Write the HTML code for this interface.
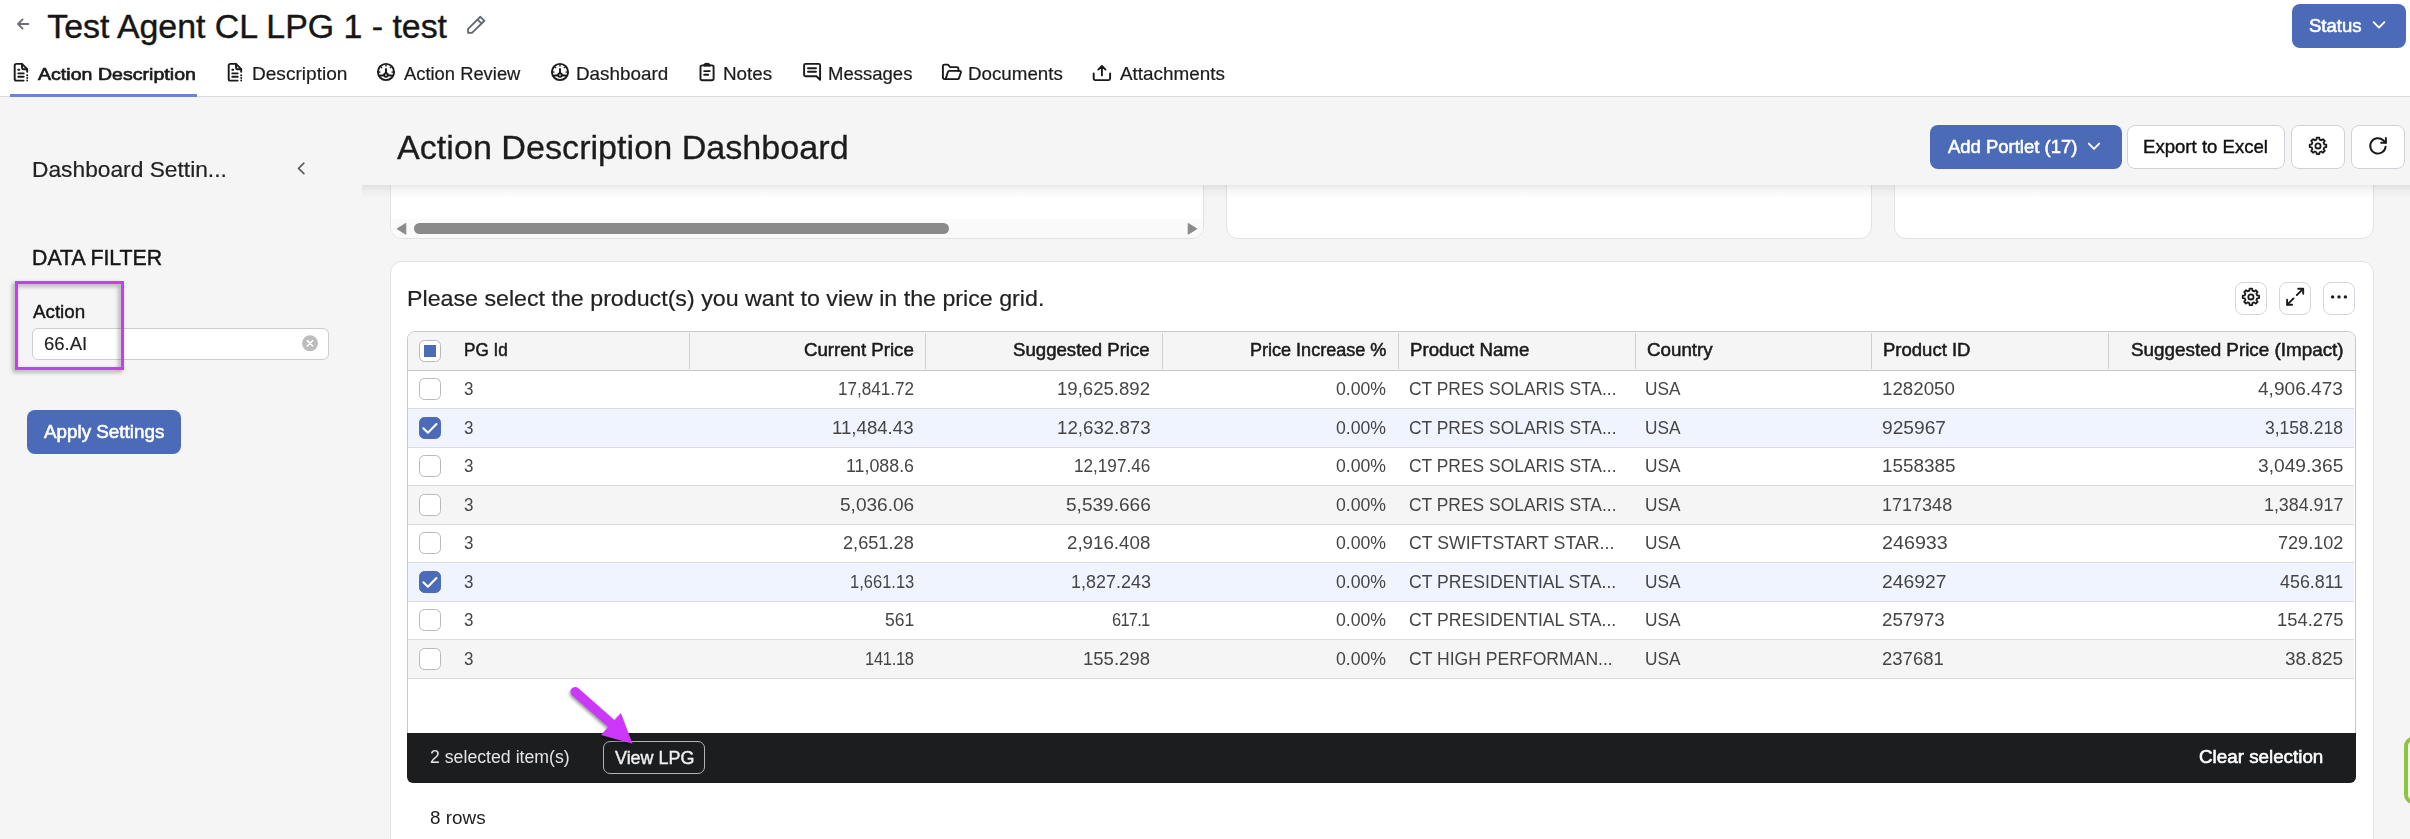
<!DOCTYPE html>
<html lang="en"><head><meta charset="utf-8"><title>Action Description Dashboard</title>
<style>

*{box-sizing:border-box}
html,body{margin:0;padding:0}
body{width:2410px;height:839px;overflow:hidden;background:#f5f5f5;font-family:"Liberation Sans",sans-serif;position:relative}
.a{position:absolute}
.t{position:absolute;white-space:pre;line-height:1;transform-origin:0 50%}
svg{position:absolute;overflow:visible}
.btn{position:absolute;border-radius:8px}
.wb{background:#fff;border:1px solid #cfd2d8}
.cb{position:absolute;width:22px;height:22px;border:1px solid #b9b9b9;border-radius:5.5px;background:#fff}
.cb.on{background:#4b6bb9;border-color:#4b6bb9}
.row{position:absolute;left:408px;width:1946px;border-bottom:1px solid #dcdcdc}
.sep{position:absolute;top:332.5px;width:1px;height:36px;background:#cfcfcf}

</style></head>
<body>
<div class="a" style="left:0;top:0;width:2410px;height:97px;background:#fff;border-bottom:1px solid #dadada"></div>
<div class="a" style="left:10px;top:93.7px;width:187px;height:3px;background:#6985d3"></div>
<svg style="left:14px;top:14px" width="20" height="20" viewBox="0 0 20 20"><path d="M14.3 10H4.3M8.6 5.4L4 10l4.6 4.6" fill="none" stroke="#6c6f75" stroke-width="1.9" stroke-linecap="round" stroke-linejoin="round"/></svg>
<svg style="left:460px;top:10px" width="30" height="30" viewBox="0 0 30 30"><path d="M8.1 22.9v-4l12.3-12.1 4 4L12 22.9z M17.6 9.6l4 4" fill="none" stroke="#666b73" stroke-width="1.9" stroke-linejoin="round" stroke-linecap="round"/></svg>
<div class="btn" style="left:2292px;top:4px;width:114px;height:44px;background:#4b6bb9"></div>
<svg style="left:2370px;top:18px" width="18" height="14" viewBox="0 0 18 14"><path d="M3.6 4.2L9 9.6l5.4-5.4" fill="none" stroke="#fff" stroke-width="1.9" stroke-linecap="round" stroke-linejoin="round"/></svg>
<svg style="left:12.6px;top:62px" width="18" height="21" viewBox="0 0 18 21"><g fill="none" stroke="#1a1a1a" stroke-width="1.9" stroke-linecap="round" stroke-linejoin="round"><path d="M10.6 18.6H3.3a1.6 1.6 0 0 1-1.6-1.6V3.5A1.6 1.6 0 0 1 3.300 1.900H9l5.200 5.200v2.600"/><path d="M9 2.200v3.400a1.600 1.600 0 0 0 1.600 1.600h3.400"/><path d="M5.300 7.700h1M5.300 11.400h5.400M5.300 14.800h5.400"/><path d="M14.200 13.300v.1M14.200 15.900v.1M14.200 18.500v.1" stroke-width="1.9"/></g></svg>
<svg style="left:226.8px;top:62px" width="18" height="21" viewBox="0 0 18 21"><g fill="none" stroke="#1a1a1a" stroke-width="1.9" stroke-linecap="round" stroke-linejoin="round"><path d="M10.6 18.6H3.3a1.6 1.6 0 0 1-1.6-1.6V3.5A1.6 1.6 0 0 1 3.300 1.900H9l5.200 5.200v2.600"/><path d="M9 2.200v3.400a1.600 1.600 0 0 0 1.600 1.600h3.400"/><path d="M5.300 7.700h1M5.300 11.400h5.400M5.300 14.800h5.400"/><path d="M14.200 13.300v.1M14.200 15.900v.1M14.200 18.500v.1" stroke-width="1.9"/></g></svg>
<svg style="left:376.2px;top:62px" width="20" height="20" viewBox="0 0 20 20"><g fill="none" stroke="#1a1a1a" stroke-width="1.9" stroke-linecap="round" stroke-linejoin="round"><circle cx="10" cy="10" r="8.1"/><path d="M10 6.900v4.200"/><circle cx="10" cy="13" r="1.800"/><path d="M2.800 13.700Q5.500 13.200 8.100 13.200M11.900 13.200Q14.500 13.200 17.200 13.700"/></g><g fill="#1a1a1a"><circle cx="10" cy="3.700" r=".85"/><circle cx="5.500" cy="5.500" r=".85"/><circle cx="14.500" cy="5.500" r=".85"/><circle cx="3.700" cy="10" r=".85"/><circle cx="16.300" cy="10" r=".85"/></g></svg>
<svg style="left:550.2px;top:62px" width="20" height="20" viewBox="0 0 20 20"><g fill="none" stroke="#1a1a1a" stroke-width="1.9" stroke-linecap="round" stroke-linejoin="round"><circle cx="10" cy="10" r="8.1"/><path d="M10 6.900v4.200"/><circle cx="10" cy="13" r="1.800"/><path d="M2.800 13.700Q5.500 13.200 8.100 13.200M11.900 13.200Q14.500 13.200 17.200 13.700"/></g><g fill="#1a1a1a"><circle cx="10" cy="3.700" r=".85"/><circle cx="5.500" cy="5.500" r=".85"/><circle cx="14.500" cy="5.500" r=".85"/><circle cx="3.700" cy="10" r=".85"/><circle cx="16.300" cy="10" r=".85"/></g></svg>
<svg style="left:697px;top:60px" width="20" height="24" viewBox="0 0 20 24"><g fill="none" stroke="#1a1a1a" stroke-width="1.9" stroke-linecap="round" stroke-linejoin="round"><rect x="3.500" y="5.400" width="13.100" height="14.800" rx="1.800"/><path d="M7.300 5.400a2.750 1.700 0 0 1 5.500 0"/><path d="M7.300 5.600h5.500"/><path d="M7.200 11.100h5.600M7.200 14.800h4"/></g></svg>
<svg style="left:801px;top:60px" width="22" height="24" viewBox="0 0 22 24"><g fill="none" stroke="#1a1a1a" stroke-width="1.9" stroke-linecap="round" stroke-linejoin="round"><path d="M4.600 3.900h13a1.500 1.500 0 0 1 1.500 1.500v14.400l-3.700-3.500H4.600a1.500 1.500 0 0 1-1.500-1.500V5.400a1.500 1.500 0 0 1 1.500-1.500z"/><path d="M7 8.300h8M7 11.700h8"/></g></svg>
<svg style="left:940px;top:61px" width="24" height="22" viewBox="0 0 24 22"><g fill="none" stroke="#1a1a1a" stroke-width="1.9" stroke-linecap="round" stroke-linejoin="round"><path d="M5.600 18.100H4.400a1.500 1.500 0 0 1-1.500-1.500V5.100a1.500 1.500 0 0 1 1.500-1.500h3.500l2.300 2.500h6.700a1.500 1.500 0 0 1 1.500 1.500v2.300"/><path d="M5.600 18.100l2.300-7.100a1.500 1.500 0 0 1 1.400-1.100h10.400a1.200 1.200 0 0 1 1.200 1.600l-1.900 5.600a1.500 1.500 0 0 1-1.400 1z"/></g></svg>
<svg style="left:1091px;top:62px" width="22" height="22" viewBox="0 0 22 22"><g fill="none" stroke="#1a1a1a" stroke-width="1.9" stroke-linecap="round" stroke-linejoin="round"><path d="M2.700 11.400v5.200a1.500 1.500 0 0 0 1.500 1.500h13.400a1.500 1.500 0 0 0 1.500-1.500v-5.200"/><path d="M10.900 13.400V4.200M7.300 7.600l3.600-3.600 3.600 3.600"/></g></svg>
<div class="a" style="left:390px;top:150px;width:814px;height:89px;background:#fff;border:1px solid #e0e2e5;border-radius:12px"></div>
<div class="a" style="left:1226px;top:150px;width:646px;height:89px;background:#fff;border:1px solid #e0e2e5;border-radius:12px"></div>
<div class="a" style="left:1894px;top:150px;width:480px;height:89px;background:#fff;border:1px solid #e0e2e5;border-radius:12px"></div>
<div class="a" style="left:391px;top:219px;width:812px;height:19px;background:#fafafa;border-radius:0 0 11px 11px"></div>
<div class="a" style="left:414px;top:223px;width:535px;height:11px;background:#8a8a8a;border-radius:6px"></div>
<svg style="left:396px;top:222px" width="12" height="14" viewBox="0 0 12 14"><path d="M1.200 6.800L9.800 1.400v10.800z" fill="#8a8a8a" stroke="#8a8a8a" stroke-width="1" stroke-linejoin="round"/></svg>
<svg style="left:1186px;top:222px" width="12" height="14" viewBox="0 0 12 14"><path d="M10.800 6.800L2.200 1.400v10.800z" fill="#8a8a8a" stroke="#8a8a8a" stroke-width="1" stroke-linejoin="round"/></svg>
<div class="a" style="left:362px;top:185px;width:2048px;height:13px;background:linear-gradient(to bottom,rgba(0,0,0,.085),rgba(0,0,0,.03) 45%,rgba(0,0,0,0))"></div>
<div class="a" style="left:362px;top:97px;width:2048px;height:88px;background:#f5f5f5"></div>
<div class="btn" style="left:1930px;top:125px;width:192px;height:44px;background:#4b6bb9"></div>
<svg style="left:2085px;top:139px" width="18" height="14" viewBox="0 0 18 14"><path d="M3.800 4.600L9 9.800l5.200-5.200" fill="none" stroke="#fff" stroke-width="1.9" stroke-linecap="round" stroke-linejoin="round"/></svg>
<div class="btn wb" style="left:2127px;top:125px;width:158px;height:44px"></div>
<div class="btn wb" style="left:2291px;top:125px;width:54px;height:44px"></div>
<div class="btn wb" style="left:2351px;top:125px;width:54px;height:44px"></div>
<svg style="left:0;top:0" width="10" height="10"><g fill="none" stroke="#1a1a1a" stroke-width="1.8" stroke-linejoin="round"><path d="M2316.43 139.59 L2316.69 137.60 L2319.31 137.60 L2319.57 139.59 L2321.35 140.33 L2322.94 139.10 L2324.80 140.96 L2323.57 142.55 L2324.31 144.33 L2326.30 144.59 L2326.30 147.21 L2324.31 147.47 L2323.57 149.25 L2324.80 150.84 L2322.94 152.70 L2321.35 151.47 L2319.57 152.21 L2319.31 154.20 L2316.69 154.20 L2316.43 152.21 L2314.65 151.47 L2313.06 152.70 L2311.20 150.84 L2312.43 149.25 L2311.69 147.47 L2309.70 147.21 L2309.70 144.59 L2311.69 144.33 L2312.43 142.55 L2311.20 140.96 L2313.06 139.10 L2314.65 140.33Z"/><circle cx="2318" cy="145.9" r="2.6"/></g></svg>
<svg style="left:0;top:0" width="10" height="10"><g fill="none" stroke="#1a1a1a" stroke-width="1.9" stroke-linecap="round" stroke-linejoin="round"><path d="M2385.600 146.600a7.700 7.700 0 1 1-2.400-6.300l2.700 2.500"/><path d="M2385.900 138v4.800h-4.800"/></g></svg>
<svg style="left:292px;top:158px" width="18" height="20" viewBox="0 0 18 20"><path d="M11.900 5.200L6.500 10.400l5.400 5.200" fill="none" stroke="#555a61" stroke-width="1.600" stroke-linecap="round" stroke-linejoin="round"/></svg>
<div class="a" style="left:32px;top:328px;width:297px;height:32px;background:#fff;border:1px solid #cdcdcd;border-radius:6px"></div>
<svg style="left:300px;top:333px" width="20" height="20" viewBox="0 0 20 20"><circle cx="10" cy="10.300" r="8" fill="#bdbdbd"/><path d="M7.300 7.600l5.400 5.400M12.700 7.600l-5.400 5.400" stroke="#fff" stroke-width="1.500" stroke-linecap="round"/></svg>
<div class="btn" style="left:27px;top:410px;width:154px;height:44px;background:#4b6bb9"></div>
<div class="a" style="left:15px;top:281px;width:109px;height:89px;border:3.2px solid #cb3bf7;filter:drop-shadow(-1.500px 2.500px 2px rgba(0,0,0,.38))"></div>
<div class="a" style="left:390px;top:261px;width:1984px;height:620px;background:#fff;border:1px solid #e0e2e5;border-radius:12px"></div>
<div class="a" style="left:2235.3px;top:282.200px;width:31.700px;height:32.500px;background:#fff;border:1px solid #d3d6dc;border-radius:8px"></div>
<div class="a" style="left:2279.2px;top:282.200px;width:31.700px;height:32.500px;background:#fff;border:1px solid #d3d6dc;border-radius:8px"></div>
<div class="a" style="left:2323.1px;top:282.200px;width:31.700px;height:32.500px;background:#fff;border:1px solid #d3d6dc;border-radius:8px"></div>
<svg style="left:0;top:0" width="10" height="10"><g fill="none" stroke="#1a1a1a" stroke-width="1.8" stroke-linejoin="round"><path d="M2249.36 290.69 L2249.60 288.70 L2252.20 288.70 L2252.44 290.69 L2254.20 291.42 L2255.78 290.19 L2257.61 292.02 L2256.38 293.60 L2257.11 295.36 L2259.10 295.60 L2259.10 298.20 L2257.11 298.44 L2256.38 300.20 L2257.61 301.78 L2255.78 303.61 L2254.20 302.38 L2252.44 303.11 L2252.20 305.10 L2249.60 305.10 L2249.36 303.11 L2247.60 302.38 L2246.02 303.61 L2244.19 301.78 L2245.42 300.20 L2244.69 298.44 L2242.70 298.20 L2242.70 295.60 L2244.69 295.36 L2245.42 293.60 L2244.19 292.02 L2246.02 290.19 L2247.60 291.42Z"/><circle cx="2250.9" cy="296.9" r="2.6"/></g></svg>
<svg style="left:0;top:0" width="10" height="10"><g fill="none" stroke="#1a1a1a" stroke-width="1.9" stroke-linecap="round" stroke-linejoin="round"><path d="M2287.300 304.600l6.200-6.200M2296.800 295.100l6.200-6.200"/><path d="M2287.100 299.800v5h5M2298.200 288.800h5v5"/></g></svg>
<svg style="left:0;top:0" width="10" height="10"><g fill="#1a1a1a"><circle cx="2332.600" cy="296.900" r="1.700"/><circle cx="2339" cy="296.900" r="1.700"/><circle cx="2345.400" cy="296.900" r="1.700"/></g></svg>
<div class="a" style="left:407px;top:331px;width:1949px;height:420px;background:#fff;border:1px solid #c5c8cc;border-radius:8px 8px 0 0"></div>
<div class="a" style="left:408px;top:332px;width:1947px;height:39px;background:#f5f5f5;border-bottom:1px solid #c6c6c6;border-radius:7px 7px 0 0"></div>
<div class="sep" style="left:689px"></div>
<div class="sep" style="left:925.3px"></div>
<div class="sep" style="left:1162px"></div>
<div class="sep" style="left:1398.3px"></div>
<div class="sep" style="left:1635px"></div>
<div class="sep" style="left:1871.3px"></div>
<div class="sep" style="left:2108px"></div>
<div class="row" style="top:371px;height:38px;background:#fff"></div>
<div class="row" style="top:409px;height:39px;background:#f0f4fe"></div>
<div class="row" style="top:448px;height:38px;background:#fff"></div>
<div class="row" style="top:486px;height:39px;background:#f5f5f5"></div>
<div class="row" style="top:525px;height:38px;background:#fff"></div>
<div class="row" style="top:563px;height:39px;background:#f0f4fe"></div>
<div class="row" style="top:602px;height:38px;background:#fff"></div>
<div class="row" style="top:640px;height:39px;background:#f5f5f5"></div>
<div class="cb" style="left:419px;top:340px"></div>
<div class="a" style="left:424px;top:345px;width:12px;height:12px;background:#4b6bb9"></div>
<div class="cb" style="left:419px;top:378px"></div>
<div class="cb on" style="left:419px;top:417px"></div>
<svg style="left:419px;top:417px" width="22" height="22" viewBox="0 0 22 22"><path d="M4.400 11.300l4.500 4.400 8.600-8.700" fill="none" stroke="#fff" stroke-width="2.100" stroke-linecap="round" stroke-linejoin="round"/></svg>
<div class="cb" style="left:419px;top:455px"></div>
<div class="cb" style="left:419px;top:494px"></div>
<div class="cb" style="left:419px;top:532px"></div>
<div class="cb on" style="left:419px;top:571px"></div>
<svg style="left:419px;top:571px" width="22" height="22" viewBox="0 0 22 22"><path d="M4.400 11.300l4.500 4.400 8.600-8.700" fill="none" stroke="#fff" stroke-width="2.100" stroke-linecap="round" stroke-linejoin="round"/></svg>
<div class="cb" style="left:419px;top:609px"></div>
<div class="cb" style="left:419px;top:648px"></div>
<div class="a" style="left:407px;top:733px;width:1949px;height:50px;background:#1c1d1f;border-radius:0 0 6px 6px"></div>
<div class="a" style="left:603px;top:741px;width:102px;height:33px;border:1px solid #b4b4b4;border-radius:7px"></div>
<svg style="left:0;top:0" width="10" height="10"><g filter="drop-shadow(-1px 2px 1.500px rgba(0,0,0,.4))"><path d="M575.300 691.700L613 725" fill="none" stroke="#cc38fa" stroke-width="9.500" stroke-linecap="round"/><path d="M632.500 743.700L601 734.900L620.900 713Z" fill="#cc38fa"/></g></svg>
<div class="a" style="left:2404px;top:737px;width:40px;height:67px;border:4px solid #8cc63f;border-radius:9px;background:#f4f4f4"></div>
<div id="texts">
<span class="t" style="left:47.24px;top:10px;font-size:33.88px;color:#161616;-webkit-text-stroke:0.4px #161616;">Test Agent CL LPG 1 - test</span>
<span class="t" style="left:38.44px;top:66px;font-size:17.3px;color:#1c1c1c;letter-spacing:0.03px;transform:scaleX(1.13);-webkit-text-stroke:0.7px #1c1c1c;">Action Description</span>
<span class="t" style="left:251.71px;top:65px;font-size:18.03px;color:#1c1c1c;transform:scaleX(1.0583);-webkit-text-stroke:0.2px #1c1c1c;">Description</span>
<span class="t" style="left:403.59px;top:65px;font-size:18.03px;color:#1c1c1c;transform:scaleX(1.0194);-webkit-text-stroke:0.2px #1c1c1c;">Action Review</span>
<span class="t" style="left:575.93px;top:65px;font-size:18.03px;color:#1c1c1c;transform:scaleX(1.0457);-webkit-text-stroke:0.2px #1c1c1c;">Dashboard</span>
<span class="t" style="left:722.93px;top:65px;font-size:18.03px;color:#1c1c1c;transform:scaleX(1.046);-webkit-text-stroke:0.2px #1c1c1c;">Notes</span>
<span class="t" style="left:827.75px;top:65px;font-size:18.03px;color:#1c1c1c;transform:scaleX(1.0284);-webkit-text-stroke:0.2px #1c1c1c;">Messages</span>
<span class="t" style="left:967.93px;top:65px;font-size:18.03px;color:#1c1c1c;transform:scaleX(1.0412);-webkit-text-stroke:0.2px #1c1c1c;">Documents</span>
<span class="t" style="left:1119.59px;top:65px;font-size:18.03px;color:#1c1c1c;transform:scaleX(1.047);-webkit-text-stroke:0.2px #1c1c1c;">Attachments</span>
<span class="t" style="left:2309.21px;top:18px;font-size:17.65px;color:#ffffff;transform:scaleX(1.0489);-webkit-text-stroke:0.55px #ffffff;">Status</span>
<span class="t" style="left:32.31px;top:159px;font-size:22.26px;color:#222;transform:scaleX(1.0229);-webkit-text-stroke:0.2px #222;">Dashboard Settin...</span>
<span class="t" style="left:32.48px;top:247px;font-size:21.89px;color:#161616;transform:scaleX(0.9737);-webkit-text-stroke:0.45px #161616;">DATA FILTER</span>
<span class="t" style="left:33.49px;top:304px;font-size:17.74px;color:#161616;transform:scaleX(1.0583);-webkit-text-stroke:0.4px #161616;">Action</span>
<span class="t" style="left:43.68px;top:335px;font-size:18.1px;color:#222;transform:scaleX(1.0239);-webkit-text-stroke:0.15px #222;">66.AI</span>
<span class="t" style="left:43.9px;top:424px;font-size:17.65px;color:#fff;transform:scaleX(1.0668);-webkit-text-stroke:0.55px #fff;">Apply Settings</span>
<span class="t" style="left:396.64px;top:131px;font-size:33.71px;color:#1c1c1c;transform:scaleX(1.013);-webkit-text-stroke:0.3px #1c1c1c;">Action Description Dashboard</span>
<span class="t" style="left:1947.6px;top:139px;font-size:17.65px;color:#fff;transform:scaleX(1.047);-webkit-text-stroke:0.55px #fff;">Add Portlet (17)</span>
<span class="t" style="left:2143.49px;top:139px;font-size:17.86px;color:#111;transform:scaleX(1.0407);-webkit-text-stroke:0.4px #111;">Export to Excel</span>
<span class="t" style="left:406.97px;top:288px;font-size:22.26px;color:#222;transform:scaleX(1.0432);-webkit-text-stroke:0.2px #222;">Please select the product(s) you want to view in the price grid.</span>
<span class="t" style="left:464.03px;top:342px;font-size:17.59px;color:#1a1a1a;transform:scaleX(0.9757);-webkit-text-stroke:0.5px #1a1a1a;">PG Id</span>
<span class="t" style="left:804.08px;top:342px;font-size:17.59px;color:#1a1a1a;transform:scaleX(1.0604);-webkit-text-stroke:0.5px #1a1a1a;">Current Price</span>
<span class="t" style="left:1013.37px;top:342px;font-size:17.59px;color:#1a1a1a;transform:scaleX(1.0594);-webkit-text-stroke:0.5px #1a1a1a;">Suggested Price</span>
<span class="t" style="left:1249.58px;top:342px;font-size:17.59px;color:#1a1a1a;transform:scaleX(1.0261);-webkit-text-stroke:0.5px #1a1a1a;">Price Increase %</span>
<span class="t" style="left:1409.94px;top:342px;font-size:17.59px;color:#1a1a1a;transform:scaleX(1.0615);-webkit-text-stroke:0.5px #1a1a1a;">Product Name</span>
<span class="t" style="left:1647.18px;top:342px;font-size:17.59px;color:#1a1a1a;transform:scaleX(1.0663);-webkit-text-stroke:0.5px #1a1a1a;">Country</span>
<span class="t" style="left:1882.75px;top:342px;font-size:17.59px;color:#1a1a1a;transform:scaleX(1.0535);-webkit-text-stroke:0.5px #1a1a1a;">Product ID</span>
<span class="t" style="left:2130.66px;top:342px;font-size:17.59px;color:#1a1a1a;transform:scaleX(1.072);-webkit-text-stroke:0.5px #1a1a1a;">Suggested Price (Impact)</span>
<span class="t" style="left:464.07px;top:380px;font-size:18.32px;color:#454545;transform:scaleX(0.926);">3</span>
<span class="t" style="left:837.86px;top:380px;font-size:18.32px;color:#454545;transform:scaleX(0.9345);">17,841.72</span>
<span class="t" style="left:1057.35px;top:380px;font-size:18.32px;color:#454545;transform:scaleX(1.0153);">19,625.892</span>
<span class="t" style="left:1336.04px;top:380px;font-size:18.32px;color:#454545;transform:scaleX(0.964);">0.00%</span>
<span class="t" style="left:1409.15px;top:380px;font-size:18.32px;color:#454545;transform:scaleX(0.9513);">CT PRES SOLARIS STA...</span>
<span class="t" style="left:1645.44px;top:380px;font-size:18.32px;color:#454545;transform:scaleX(0.9419);">USA</span>
<span class="t" style="left:1882.04px;top:380px;font-size:18.32px;color:#454545;transform:scaleX(1.0229);">1282050</span>
<span class="t" style="left:2258.32px;top:380px;font-size:18.32px;color:#454545;transform:scaleX(1.0431);">4,906.473</span>
<span class="t" style="left:464.07px;top:419px;font-size:18.32px;color:#454545;transform:scaleX(0.926);">3</span>
<span class="t" style="left:832.35px;top:419px;font-size:18.32px;color:#454545;transform:scaleX(1.0178);">11,484.43</span>
<span class="t" style="left:1056.74px;top:419px;font-size:18.32px;color:#454545;transform:scaleX(1.0215);">12,632.873</span>
<span class="t" style="left:1336.04px;top:419px;font-size:18.32px;color:#454545;transform:scaleX(0.964);">0.00%</span>
<span class="t" style="left:1409.15px;top:419px;font-size:18.32px;color:#454545;transform:scaleX(0.9513);">CT PRES SOLARIS STA...</span>
<span class="t" style="left:1645.44px;top:419px;font-size:18.32px;color:#454545;transform:scaleX(0.9419);">USA</span>
<span class="t" style="left:1882.35px;top:419px;font-size:18.32px;color:#454545;transform:scaleX(1.0465);">925967</span>
<span class="t" style="left:2265.24px;top:419px;font-size:18.32px;color:#454545;transform:scaleX(0.9574);">3,158.218</span>
<span class="t" style="left:464.07px;top:457px;font-size:18.32px;color:#454545;transform:scaleX(0.926);">3</span>
<span class="t" style="left:845.91px;top:457px;font-size:18.32px;color:#454545;transform:scaleX(0.9725);">11,088.6</span>
<span class="t" style="left:1074.06px;top:457px;font-size:18.32px;color:#454545;transform:scaleX(0.9362);">12,197.46</span>
<span class="t" style="left:1336.04px;top:457px;font-size:18.32px;color:#454545;transform:scaleX(0.964);">0.00%</span>
<span class="t" style="left:1409.15px;top:457px;font-size:18.32px;color:#454545;transform:scaleX(0.9513);">CT PRES SOLARIS STA...</span>
<span class="t" style="left:1645.44px;top:457px;font-size:18.32px;color:#454545;transform:scaleX(0.9419);">USA</span>
<span class="t" style="left:1882.03px;top:457px;font-size:18.32px;color:#454545;transform:scaleX(1.0326);">1558385</span>
<span class="t" style="left:2257.95px;top:457px;font-size:18.32px;color:#454545;transform:scaleX(1.0471);">3,049.365</span>
<span class="t" style="left:464.07px;top:496px;font-size:18.32px;color:#454545;transform:scaleX(0.926);">3</span>
<span class="t" style="left:839.86px;top:496px;font-size:18.32px;color:#454545;transform:scaleX(1.0413);">5,036.06</span>
<span class="t" style="left:1065.66px;top:496px;font-size:18.32px;color:#454545;transform:scaleX(1.0402);">5,539.666</span>
<span class="t" style="left:1336.04px;top:496px;font-size:18.32px;color:#454545;transform:scaleX(0.964);">0.00%</span>
<span class="t" style="left:1409.15px;top:496px;font-size:18.32px;color:#454545;transform:scaleX(0.9513);">CT PRES SOLARIS STA...</span>
<span class="t" style="left:1645.44px;top:496px;font-size:18.32px;color:#454545;transform:scaleX(0.9419);">USA</span>
<span class="t" style="left:1882.09px;top:496px;font-size:18.32px;color:#454545;transform:scaleX(0.984);">1717348</span>
<span class="t" style="left:2264.01px;top:496px;font-size:18.32px;color:#454545;transform:scaleX(0.9735);">1,384.917</span>
<span class="t" style="left:464.07px;top:534px;font-size:18.32px;color:#454545;transform:scaleX(0.926);">3</span>
<span class="t" style="left:843.31px;top:534px;font-size:18.32px;color:#454545;transform:scaleX(0.9924);">2,651.28</span>
<span class="t" style="left:1067.08px;top:534px;font-size:18.32px;color:#454545;transform:scaleX(1.0226);">2,916.408</span>
<span class="t" style="left:1336.04px;top:534px;font-size:18.32px;color:#454545;transform:scaleX(0.964);">0.00%</span>
<span class="t" style="left:1409.13px;top:534px;font-size:18.32px;color:#454545;transform:scaleX(0.9687);">CT SWIFTSTART STAR...</span>
<span class="t" style="left:1645.44px;top:534px;font-size:18.32px;color:#454545;transform:scaleX(0.9419);">USA</span>
<span class="t" style="left:1882.32px;top:534px;font-size:18.32px;color:#454545;transform:scaleX(1.0767);">246933</span>
<span class="t" style="left:2278.01px;top:534px;font-size:18.32px;color:#454545;transform:scaleX(0.987);">729.102</span>
<span class="t" style="left:464.07px;top:573px;font-size:18.32px;color:#454545;transform:scaleX(0.926);">3</span>
<span class="t" style="left:849.7px;top:573px;font-size:18.32px;color:#454545;transform:scaleX(0.9017);">1,661.13</span>
<span class="t" style="left:1070.5px;top:573px;font-size:18.32px;color:#454545;transform:scaleX(0.9803);">1,827.243</span>
<span class="t" style="left:1336.04px;top:573px;font-size:18.32px;color:#454545;transform:scaleX(0.964);">0.00%</span>
<span class="t" style="left:1409.14px;top:573px;font-size:18.32px;color:#454545;transform:scaleX(0.9621);">CT PRESIDENTIAL STA...</span>
<span class="t" style="left:1645.44px;top:573px;font-size:18.32px;color:#454545;transform:scaleX(0.9419);">USA</span>
<span class="t" style="left:1882.35px;top:573px;font-size:18.32px;color:#454545;transform:scaleX(1.0549);">246927</span>
<span class="t" style="left:2280.15px;top:573px;font-size:18.32px;color:#454545;transform:scaleX(0.9758);">456.811</span>
<span class="t" style="left:464.07px;top:611px;font-size:18.32px;color:#454545;transform:scaleX(0.926);">3</span>
<span class="t" style="left:884.84px;top:611px;font-size:18.32px;color:#454545;transform:scaleX(0.9571);">561</span>
<span class="t" style="left:1112.2px;top:611px;font-size:18.32px;color:#454545;letter-spacing:-0.833px;transform:scaleX(0.9);">617.1</span>
<span class="t" style="left:1336.04px;top:611px;font-size:18.32px;color:#454545;transform:scaleX(0.964);">0.00%</span>
<span class="t" style="left:1409.14px;top:611px;font-size:18.32px;color:#454545;transform:scaleX(0.9621);">CT PRESIDENTIAL STA...</span>
<span class="t" style="left:1645.44px;top:611px;font-size:18.32px;color:#454545;transform:scaleX(0.9419);">USA</span>
<span class="t" style="left:1882.38px;top:611px;font-size:18.32px;color:#454545;transform:scaleX(1.0247);">257973</span>
<span class="t" style="left:2276.87px;top:611px;font-size:18.32px;color:#454545;transform:scaleX(1.0025);">154.275</span>
<span class="t" style="left:464.07px;top:650px;font-size:18.32px;color:#454545;transform:scaleX(0.926);">3</span>
<span class="t" style="left:864.91px;top:650px;font-size:18.32px;color:#454545;letter-spacing:-0.305px;transform:scaleX(0.9);">141.18</span>
<span class="t" style="left:1083.36px;top:650px;font-size:18.32px;color:#454545;transform:scaleX(1.0124);">155.298</span>
<span class="t" style="left:1336.04px;top:650px;font-size:18.32px;color:#454545;transform:scaleX(0.964);">0.00%</span>
<span class="t" style="left:1409.14px;top:650px;font-size:18.32px;color:#454545;transform:scaleX(0.9596);">CT HIGH PERFORMAN...</span>
<span class="t" style="left:1645.44px;top:650px;font-size:18.32px;color:#454545;transform:scaleX(0.9419);">USA</span>
<span class="t" style="left:1882.39px;top:650px;font-size:18.32px;color:#454545;transform:scaleX(1.0106);">237681</span>
<span class="t" style="left:2285.16px;top:650px;font-size:18.32px;color:#454545;transform:scaleX(1.0381);">38.825</span>
<span class="t" style="left:429.63px;top:748px;font-size:18.32px;color:#e4e4e4;transform:scaleX(0.9668);">2 selected item(s)</span>
<span class="t" style="left:614.98px;top:750px;font-size:17.86px;color:#f0f0f0;transform:scaleX(1.0041);-webkit-text-stroke:0.4px #f0f0f0;">View LPG</span>
<span class="t" style="left:2199.32px;top:749px;font-size:17.65px;color:#fff;transform:scaleX(1.0653);-webkit-text-stroke:0.55px #fff;">Clear selection</span>
<span class="t" style="left:430.02px;top:810px;font-size:17.55px;color:#1e1e1e;transform:scaleX(1.076);">8 rows</span>
</div>
</body></html>
